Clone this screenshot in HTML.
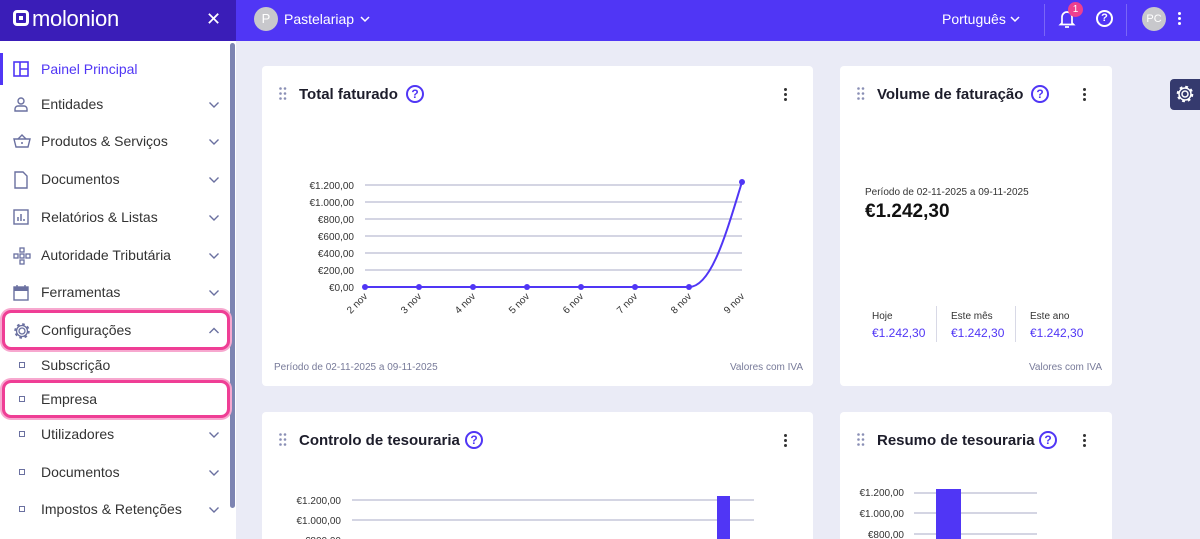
<!DOCTYPE html>
<html><head><meta charset="utf-8"><style>
*{margin:0;padding:0;box-sizing:border-box}
html{width:1200px;height:539px;overflow:hidden}
body{width:1200px;height:539px;overflow:hidden;background:#eaebf6;font-family:"Liberation Sans",sans-serif;position:relative;color:#222}
.a{position:absolute}
.hl{left:0;top:0;width:236px;height:41px;background:#3a1db8}
.hr{left:236px;top:0;width:964px;height:41px;background:#5036f5}
.side{left:0;top:41px;width:229px;height:498px;background:#fff}
.scroll{left:229px;top:41px;width:7px;height:498px;background:#fff}
.thumb{left:230px;top:43px;width:5px;height:465px;background:#7d84b2;border-radius:3px}
.item{position:absolute;left:0;width:229px;height:38px;font-size:14px;color:#333;display:flex;align-items:center}
.item .ic{position:absolute;left:13px;top:11px}
.item .t{position:absolute;left:41px}
.item .ch{position:absolute;left:208px;top:16px}
.card{position:absolute;background:#fff;border-radius:4px}
.title{position:absolute;font-weight:bold;font-size:15px;color:#1d1d2b}
.q{position:absolute;width:18px;height:18px;border:2px solid #5036f5;border-radius:50%;color:#5036f5;font-size:12px;font-weight:bold;text-align:center;line-height:14px}
.dots{position:absolute;width:3px}
.dots i{display:block;width:3px;height:3px;background:#333;border-radius:50%;margin-bottom:2px}
.sm{font-size:10px;color:#333}
.hi{outline:3px solid #ef3e95;box-shadow:0 0 0 5px #f7a8cf;border-radius:6px}
</style></head><body>
<div class="a hl"></div><div class="a hr"></div>
<!-- logo -->
<div class="a" style="left:13px;top:10px;width:16px;height:16px;border:3px solid #fff;border-radius:4px"></div>
<div class="a" style="left:19px;top:16px;width:4px;height:4px;background:#fff"></div>
<div class="a" style="left:32px;top:6px;color:#fff;font-size:22px;letter-spacing:-0.3px">molonion</div>
<div class="a" style="left:206px;top:9px;color:#fff;font-size:18px">✕</div>
<div class="a" style="left:254px;top:7px;width:24px;height:24px;border-radius:50%;background:#c8c8cc;color:#fff;font-size:13px;text-align:center;line-height:24px">P</div>
<div class="a" style="left:284px;top:11px;color:#fff;font-size:14px">Pastelariap</div>
<svg class="a" style="left:360px;top:16px" width="10" height="7"><path d="M1 1l4 4 4-4" stroke="#fff" stroke-width="1.5" fill="none"/></svg>
<div class="a" style="left:942px;top:11px;color:#fff;font-size:14px">Português</div>
<svg class="a" style="left:1010px;top:16px" width="10" height="7"><path d="M1 1l4 4 4-4" stroke="#fff" stroke-width="1.5" fill="none"/></svg>
<div class="a" style="left:1044px;top:4px;width:1px;height:32px;background:#7a66f7"></div>
<div class="a" style="left:1126px;top:4px;width:1px;height:32px;background:#7a66f7"></div>
<svg class="a" style="left:1058px;top:9px" width="18" height="20"><path d="M4 14V8a5 5 0 0110 0v6l1.5 1.5h-13z" stroke="#fff" stroke-width="1.7" fill="none"/><path d="M7 18h4" stroke="#fff" stroke-width="1.7"/></svg>
<div class="a" style="left:1068px;top:2px;width:15px;height:15px;border-radius:50%;background:#ee3f8f;color:#fff;font-size:10px;text-align:center;line-height:15px">1</div>
<div class="a" style="left:1096px;top:10px;width:17px;height:17px;border:2px solid #fff;border-radius:50%;color:#fff;font-size:11px;font-weight:bold;text-align:center;line-height:13px">?</div>
<div class="a" style="left:1142px;top:7px;width:24px;height:24px;border-radius:50%;background:#c8c8cc;color:#fff;font-size:11px;text-align:center;line-height:24px">PC</div>
<div class="a" style="left:1178px;top:12px;width:3px"><i style="display:block;width:3px;height:3px;background:#fff;border-radius:50%;margin-bottom:2px"></i><i style="display:block;width:3px;height:3px;background:#fff;border-radius:50%;margin-bottom:2px"></i><i style="display:block;width:3px;height:3px;background:#fff;border-radius:50%"></i></div>

<div class="a side"></div><div class="a scroll"></div><div class="a thumb"></div>
<div class="a" style="left:0;top:53px;width:3px;height:32px;background:#5036f5"></div>
<div class="item" style="top:50px;color:#5036f5"><svg class="ic" width="16" height="16"><rect x="1" y="1" width="14" height="14" stroke="#5036f5" stroke-width="1.6" fill="none"/><path d="M7 1v14M7 8h8" stroke="#5036f5" stroke-width="1.6"/></svg><span class="t">Painel Principal</span></div>
<div class="item" style="top:85px"><svg class="ic" width="16" height="16"><circle cx="8" cy="5" r="3" stroke="#6a70a0" stroke-width="1.4" fill="none"/><path d="M2 15v-2a3 3 0 013-3h6a3 3 0 013 3v2z" stroke="#6a70a0" stroke-width="1.4" fill="none"/></svg><span class="t">Entidades</span><svg class="ch" width="12" height="8"><path d="M1.5 1.5l4.5 4.5 4.5-4.5" stroke="#6a70a0" stroke-width="1.4" fill="none"/></svg></div>
<div class="item" style="top:122px"><svg class="ic" width="18" height="16"><path d="M1 6h16l-2 8H3z" stroke="#6a70a0" stroke-width="1.4" fill="none"/><path d="M5 6l4-4 4 4" stroke="#6a70a0" stroke-width="1.4" fill="none"/><circle cx="9" cy="10" r="1" fill="#6a70a0"/></svg><span class="t">Produtos &amp; Serviços</span><svg class="ch" width="12" height="8"><path d="M1.5 1.5l4.5 4.5 4.5-4.5" stroke="#6a70a0" stroke-width="1.4" fill="none"/></svg></div>
<div class="item" style="top:160px"><svg class="ic" width="16" height="18"><path d="M2 1h8l4 4v12H2z" stroke="#6a70a0" stroke-width="1.4" fill="none"/></svg><span class="t">Documentos</span><svg class="ch" width="12" height="8"><path d="M1.5 1.5l4.5 4.5 4.5-4.5" stroke="#6a70a0" stroke-width="1.4" fill="none"/></svg></div>
<div class="item" style="top:198px"><svg class="ic" width="16" height="16"><rect x="1" y="1" width="14" height="14" stroke="#6a70a0" stroke-width="1.4" fill="none"/><path d="M5 12V8M8 12V5M11 12v-2" stroke="#6a70a0" stroke-width="1.5"/></svg><span class="t">Relatórios &amp; Listas</span><svg class="ch" width="12" height="8"><path d="M1.5 1.5l4.5 4.5 4.5-4.5" stroke="#6a70a0" stroke-width="1.4" fill="none"/></svg></div>
<div class="item" style="top:236px"><svg class="ic" width="18" height="18"><g stroke="#6a70a0" stroke-width="1.3" fill="none"><rect x="7" y="1" width="4" height="4"/><rect x="7" y="7" width="4" height="4"/><rect x="7" y="13" width="4" height="4"/><rect x="1" y="7" width="4" height="4"/><rect x="13" y="7" width="4" height="4"/></g></svg><span class="t">Autoridade Tributária</span><svg class="ch" width="12" height="8"><path d="M1.5 1.5l4.5 4.5 4.5-4.5" stroke="#6a70a0" stroke-width="1.4" fill="none"/></svg></div>
<div class="item" style="top:273px"><svg class="ic" width="16" height="17"><rect x="1" y="3" width="14" height="13" stroke="#6a70a0" stroke-width="1.4" fill="none"/><rect x="1" y="3" width="14" height="4" fill="#6a70a0"/><path d="M4 1v3M12 1v3" stroke="#6a70a0" stroke-width="1.4"/></svg><span class="t">Ferramentas</span><svg class="ch" width="12" height="8"><path d="M1.5 1.5l4.5 4.5 4.5-4.5" stroke="#6a70a0" stroke-width="1.4" fill="none"/></svg></div>
<div class="a hi" style="left:5px;top:313px;width:222px;height:34px"></div>
<div class="item" style="top:311px"><svg class="ic" width="18" height="18"><circle cx="9" cy="9" r="3" stroke="#6a70a0" stroke-width="1.3" fill="none"/><circle cx="9" cy="9" r="6.5" stroke="#6a70a0" stroke-width="2.5" stroke-dasharray="2.5 2.6" fill="none"/><circle cx="9" cy="9" r="5.5" stroke="#6a70a0" stroke-width="1.3" fill="none"/></svg><span class="t">Configurações</span><svg class="ch" width="12" height="8"><path d="M1.5 6l4.5-4.5 4.5 4.5" stroke="#6a70a0" stroke-width="1.4" fill="none"/></svg></div>
<div class="item" style="top:346px"><span class="a" style="left:19px;top:16px;width:6px;height:6px;border:1px solid #6a70a0"></span><span class="t">Subscrição</span></div>
<div class="a hi" style="left:5px;top:383px;width:222px;height:32px"></div>
<div class="item" style="top:380px"><span class="a" style="left:19px;top:16px;width:6px;height:6px;border:1px solid #6a70a0"></span><span class="t">Empresa</span></div>
<div class="item" style="top:415px"><span class="a" style="left:19px;top:16px;width:6px;height:6px;border:1px solid #6a70a0"></span><span class="t">Utilizadores</span><svg class="ch" width="12" height="8"><path d="M1.5 1.5l4.5 4.5 4.5-4.5" stroke="#6a70a0" stroke-width="1.4" fill="none"/></svg></div>
<div class="item" style="top:453px"><span class="a" style="left:19px;top:16px;width:6px;height:6px;border:1px solid #6a70a0"></span><span class="t">Documentos</span><svg class="ch" width="12" height="8"><path d="M1.5 1.5l4.5 4.5 4.5-4.5" stroke="#6a70a0" stroke-width="1.4" fill="none"/></svg></div>
<div class="item" style="top:490px"><span class="a" style="left:19px;top:16px;width:6px;height:6px;border:1px solid #6a70a0"></span><span class="t">Impostos &amp; Retenções</span><svg class="ch" width="12" height="8"><path d="M1.5 1.5l4.5 4.5 4.5-4.5" stroke="#6a70a0" stroke-width="1.4" fill="none"/></svg></div>

<!-- card 1 -->
<div class="card" style="left:262px;top:66px;width:551px;height:320px"></div>
<svg class="a" style="left:279px;top:87px" width="8" height="14"><g fill="#8a8fb5"><circle cx="1.5" cy="1.5" r="1.3"/><circle cx="6" cy="1.5" r="1.3"/><circle cx="1.5" cy="6.5" r="1.3"/><circle cx="6" cy="6.5" r="1.3"/><circle cx="1.5" cy="11.5" r="1.3"/><circle cx="6" cy="11.5" r="1.3"/></g></svg>
<div class="title" style="left:299px;top:86px">Total faturado</div>
<div class="q" style="left:406px;top:85px">?</div>
<div class="dots" style="left:784px;top:88px"><i></i><i></i><i></i></div>
<svg class="a" style="left:262px;top:170px" width="551" height="160">
<g stroke="#c5c7da" stroke-width="1.5"><path d="M103 15H480M103 32H480M103 49H480M103 66H480M103 83H480M103 100H480"/></g>
<g font-size="10" fill="#333" text-anchor="end" font-family="Liberation Sans"><text x="92" y="19">€1.200,00</text><text x="92" y="36">€1.000,00</text><text x="92" y="53">€800,00</text><text x="92" y="70">€600,00</text><text x="92" y="87">€400,00</text><text x="92" y="104">€200,00</text><text x="92" y="121">€0,00</text></g>
<path d="M103 117H427C450 117 465 60 480 12" stroke="#5036f5" stroke-width="2" fill="none"/>
<g fill="#5036f5"><circle cx="103" cy="117" r="3"/><circle cx="157" cy="117" r="3"/><circle cx="211" cy="117" r="3"/><circle cx="265" cy="117" r="3"/><circle cx="319" cy="117" r="3"/><circle cx="373" cy="117" r="3"/><circle cx="427" cy="117" r="3"/><circle cx="480" cy="12" r="3"/></g>
<g font-size="10" fill="#333" text-anchor="end" font-family="Liberation Sans"><text transform="translate(106,127) rotate(-45)">2 nov</text><text transform="translate(160,127) rotate(-45)">3 nov</text><text transform="translate(214,127) rotate(-45)">4 nov</text><text transform="translate(268,127) rotate(-45)">5 nov</text><text transform="translate(322,127) rotate(-45)">6 nov</text><text transform="translate(376,127) rotate(-45)">7 nov</text><text transform="translate(430,127) rotate(-45)">8 nov</text><text transform="translate(483,127) rotate(-45)">9 nov</text></g>
</svg>
<div class="a" style="left:274px;top:362px;font-size:10px;color:#777a99">Período de 02-11-2025 a 09-11-2025</div>
<div class="a" style="left:730px;top:362px;font-size:10px;color:#777a99">Valores com IVA</div>

<!-- card 2 -->
<div class="card" style="left:840px;top:66px;width:272px;height:320px"></div>
<svg class="a" style="left:857px;top:87px" width="8" height="14"><g fill="#8a8fb5"><circle cx="1.5" cy="1.5" r="1.3"/><circle cx="6" cy="1.5" r="1.3"/><circle cx="1.5" cy="6.5" r="1.3"/><circle cx="6" cy="6.5" r="1.3"/><circle cx="1.5" cy="11.5" r="1.3"/><circle cx="6" cy="11.5" r="1.3"/></g></svg>
<div class="title" style="left:877px;top:86px">Volume de faturação</div>
<div class="q" style="left:1031px;top:85px">?</div>
<div class="dots" style="left:1083px;top:88px"><i></i><i></i><i></i></div>
<div class="a" style="left:865px;top:187px;font-size:10px;color:#333">Período de 02-11-2025 a 09-11-2025</div>
<div class="a" style="left:865px;top:201px;font-size:19px;font-weight:bold;color:#111">€1.242,30</div>
<div class="a" style="left:936px;top:306px;width:1px;height:36px;background:#d8d9e6"></div>
<div class="a" style="left:1015px;top:306px;width:1px;height:36px;background:#d8d9e6"></div>
<div class="a sm" style="left:872px;top:311px">Hoje</div><div class="a" style="left:872px;top:326px;font-size:12px;color:#5036f5">€1.242,30</div>
<div class="a sm" style="left:951px;top:311px">Este mês</div><div class="a" style="left:951px;top:326px;font-size:12px;color:#5036f5">€1.242,30</div>
<div class="a sm" style="left:1030px;top:311px">Este ano</div><div class="a" style="left:1030px;top:326px;font-size:12px;color:#5036f5">€1.242,30</div>
<div class="a" style="left:1029px;top:362px;font-size:10px;color:#777a99">Valores com IVA</div>

<div class="a" style="left:1170px;top:79px;width:30px;height:31px;background:#353a6e;border-radius:4px 0 0 4px"></div>
<svg class="a" style="left:1175px;top:84px" width="20" height="20"><circle cx="10" cy="10" r="3" stroke="#fff" stroke-width="1.5" fill="none"/><circle cx="10" cy="10" r="7" stroke="#fff" stroke-width="2.6" stroke-dasharray="2.7 2.8" fill="none"/><circle cx="10" cy="10" r="6" stroke="#fff" stroke-width="1.5" fill="none"/></svg>

<!-- card 3 -->
<div class="card" style="left:262px;top:412px;width:551px;height:127px;border-radius:4px 4px 0 0"></div>
<svg class="a" style="left:279px;top:433px" width="8" height="14"><g fill="#8a8fb5"><circle cx="1.5" cy="1.5" r="1.3"/><circle cx="6" cy="1.5" r="1.3"/><circle cx="1.5" cy="6.5" r="1.3"/><circle cx="6" cy="6.5" r="1.3"/><circle cx="1.5" cy="11.5" r="1.3"/><circle cx="6" cy="11.5" r="1.3"/></g></svg>
<div class="title" style="left:299px;top:432px">Controlo de tesouraria</div>
<div class="q" style="left:465px;top:431px">?</div>
<div class="dots" style="left:784px;top:434px"><i></i><i></i><i></i></div>
<svg class="a" style="left:262px;top:480px" width="551" height="59">
<path d="M90 20H492M90 40H492" stroke="#c5c7da" stroke-width="1.5"/>
<rect x="455" y="16" width="13" height="50" fill="#5036f5"/>
<g font-size="10" fill="#333" text-anchor="end" font-family="Liberation Sans"><text x="79" y="24">€1.200,00</text><text x="79" y="44">€1.000,00</text><text x="79" y="64">€800,00</text></g>
</svg>

<!-- card 4 -->
<div class="card" style="left:840px;top:412px;width:272px;height:127px;border-radius:4px 4px 0 0"></div>
<svg class="a" style="left:857px;top:433px" width="8" height="14"><g fill="#8a8fb5"><circle cx="1.5" cy="1.5" r="1.3"/><circle cx="6" cy="1.5" r="1.3"/><circle cx="1.5" cy="6.5" r="1.3"/><circle cx="6" cy="6.5" r="1.3"/><circle cx="1.5" cy="11.5" r="1.3"/><circle cx="6" cy="11.5" r="1.3"/></g></svg>
<div class="title" style="left:877px;top:432px">Resumo de tesouraria</div>
<div class="q" style="left:1039px;top:431px">?</div>
<div class="dots" style="left:1083px;top:434px"><i></i><i></i><i></i></div>
<svg class="a" style="left:840px;top:480px" width="272" height="59">
<path d="M74 13H197M74 33H197M74 54H197" stroke="#c5c7da" stroke-width="1.5"/>
<rect x="96" y="9" width="25" height="60" fill="#5036f5"/>
<g font-size="10" fill="#333" text-anchor="end" font-family="Liberation Sans"><text x="64" y="16">€1.200,00</text><text x="64" y="37">€1.000,00</text><text x="64" y="58">€800,00</text></g>
</svg>
</body></html>
